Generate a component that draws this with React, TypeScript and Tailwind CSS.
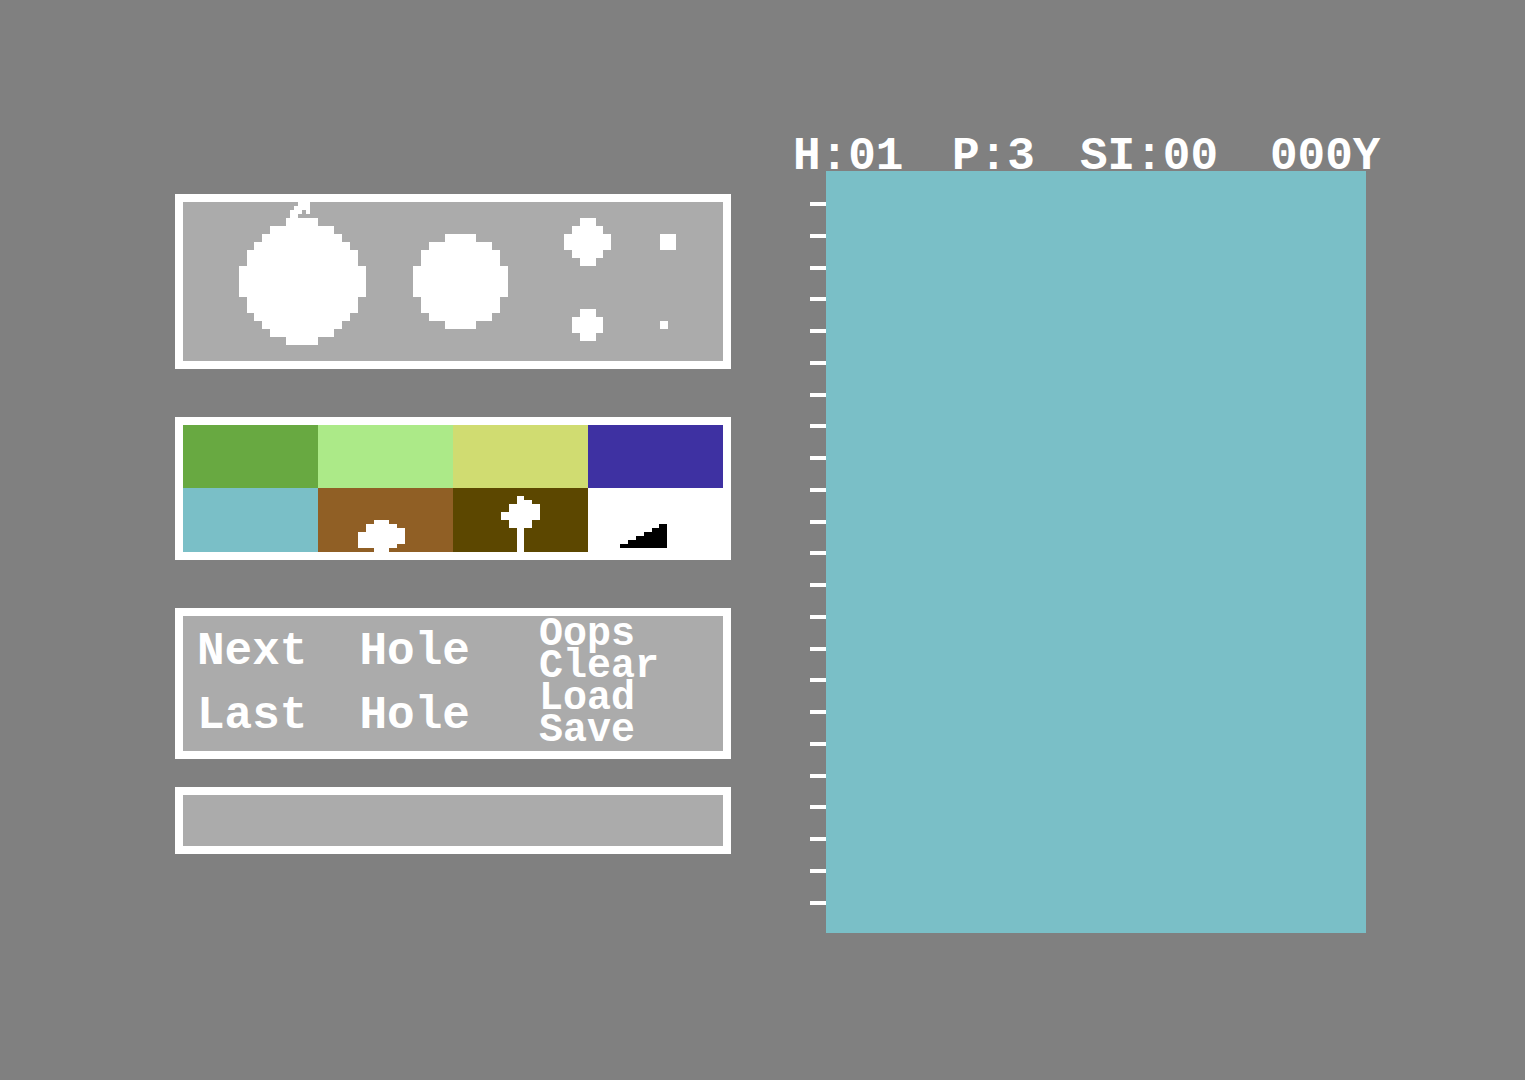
import { useState } from "react";

/* x, y, width, height on the pixel grid */
type Rect = [number, number, number, number];

interface Sprite {
  name: string;
  cols: number;
  rows: number;
  tall?: boolean;
  rects: Rect[];
}

/* ================= BRUSHES ================= */
const brushes: Sprite[] = [
  {
    name: "Huge brush",
    cols: 26,
    rows: 20,
    tall: true,
    rects: [
      [14.5, 0, 1.5, 0.5],
      [14, 0.5, 2, 0.5],
      [13.5, 1, 1.5, 0.5],
      [15.5, 1, 0.5, 0.5],
      [13.5, 1.5, 1, 0.5],
      [13, 2, 4, 16],
      [11, 3, 8, 14],
      [10, 4, 10, 12],
      [9, 5, 12, 10],
      [8, 6, 14, 8],
      [7, 8, 16, 4],
    ],
  },
  {
    name: "Large brush",
    cols: 18,
    rows: 20,
    tall: true,
    rects: [
      [7, 4, 4, 12],
      [5, 5, 8, 10],
      [4, 6, 10, 8],
      [3, 8, 12, 4],
    ],
  },
  {
    name: "Medium brush",
    cols: 13,
    rows: 10,
    rects: [
      [6, 2, 2, 6],
      [5, 3, 4, 4],
      [4, 4, 6, 2],
    ],
  },
  {
    name: "Small brush",
    cols: 13,
    rows: 10,
    rects: [
      [6, 3.5, 2, 4],
      [5, 4.5, 4, 2],
    ],
  },
  { name: "Square brush", cols: 11, rows: 10, rects: [[3, 4, 2, 2]] },
  { name: "Dot brush", cols: 11, rows: 10, rects: [[3, 5, 1, 1]] },
];

/* ================= PALETTE ================= */
const bush: Rect[] = [
  [7, 4, 2, 0.5],
  [6, 4.5, 4, 0.5],
  [6, 5, 5, 0.5],
  [5, 5.5, 6, 1.5],
  [5, 7, 5, 0.5],
  [7, 7.5, 2, 0.5],
];

const tree: Rect[] = [
  [8, 1, 1, 7],
  [8, 1.5, 2, 0.5],
  [7, 2, 4, 1],
  [6, 3, 5, 1],
  [7, 4, 3, 1],
];

const slope: Rect[] = [
  [9, 4.5, 1, 0.5],
  [8, 5, 2, 0.5],
  [7, 5.5, 3, 0.5],
  [6, 6, 4, 0.5],
  [5, 6.5, 5, 0.5],
  [4, 7, 6, 0.5],
];

const swatches = [
  { name: "Fairway", bg: "bg-[#68a941]", ink: "text-white", rects: [] as Rect[] },
  { name: "Green", bg: "bg-[#acea88]", ink: "text-white", rects: [] as Rect[] },
  { name: "Sand", bg: "bg-[#d0dc71]", ink: "text-white", rects: [] as Rect[] },
  { name: "Water", bg: "bg-[#3e31a2]", ink: "text-white", rects: [] as Rect[] },
  { name: "Rough", bg: "bg-[#7abfc7]", ink: "text-white", rects: [] as Rect[] },
  { name: "Bush", bg: "bg-[#905f25]", ink: "text-white", rects: bush },
  { name: "Tree", bg: "bg-[#5c4700]", ink: "text-white", rects: tree },
  { name: "Slope", bg: "bg-white", ink: "text-black", rects: slope },
];

const fileActions = ["Oops", "Clear", "Load", "Save"];
const holeActions = ["Next", "Last"];

/* ruler marks beside the hole view */
const ticks: Rect[] = Array.from({ length: 23 }, (_, i) => [0, 31 + Math.round(i * 31.75), 16, 4]);

const PixelArt = ({ cols, rows, rects }: { cols: number; rows: number; rects: Rect[] }) => (
  <svg
    viewBox={`0 0 ${cols} ${rows}`}
    className="block w-full"
    fill="currentColor"
    shapeRendering="crispEdges"
    aria-hidden="true"
  >
    {rects.map(([x, y, w, h], i) => (
      <rect key={i} x={x} y={y} width={w} height={h} />
    ))}
  </svg>
);

const App = () => {
  const [brush, setBrush] = useState("Huge brush");
  const [colour, setColour] = useState("Rough");

  return (
    <main className="grid min-h-screen grid-cols-[556fr_607fr] items-start gap-[62px] bg-[#808080] pt-[141px] pr-[125px] pb-12 pl-[175px] font-['Liberation_Mono',monospace] text-[46px] leading-8 font-bold text-white">
      {/* ================= TOOL PANELS ================= */}
      <div className="flex flex-col gap-12 pt-[53px]">
        <section className="grid grid-flow-col grid-cols-[26fr_18fr_13fr_11fr] grid-rows-2 border-8 border-white bg-[#ababab]">
          {brushes.map((b) => (
            <button
              key={b.name}
              aria-label={b.name}
              aria-pressed={brush === b.name}
              onClick={() => setBrush(b.name)}
              className={b.tall ? "row-span-2" : ""}
            >
              <PixelArt cols={b.cols} rows={b.rows} rects={b.rects} />
            </button>
          ))}
        </section>

        <section className="grid grid-cols-4 border-8 border-white bg-white">
          {swatches.map((s) => (
            <button
              key={s.name}
              aria-label={s.name}
              aria-pressed={colour === s.name}
              onClick={() => setColour(s.name)}
              className={`${s.bg} ${s.ink}`}
            >
              <PixelArt cols={17} rows={8} rects={s.rects} />
            </button>
          ))}
        </section>

        <div className="flex flex-col gap-7">
          <section className="flex border-8 border-white bg-[#ababab] pb-1 pl-3.5">
            <div className="flex grow flex-col items-start gap-8 pt-5">
              {holeActions.map((label) => (
                <button key={label} className="flex gap-[52px]">
                  <span>{label}</span>
                  <span>Hole</span>
                </button>
              ))}
            </div>
            <div className="flex w-[184px] flex-col items-start pt-[3px] text-[40px] leading-8">
              {fileActions.map((label) => (
                <button key={label}>{label}</button>
              ))}
            </div>
          </section>

          {/* Message line */}
          <output className="block h-[67px] border-8 border-white bg-[#ababab]" />
        </div>
      </div>

      {/* ================= HOLE VIEW ================= */}
      <div>
        <h1 className="grid h-[30px] grid-cols-[159fr_128fr_190fr_130fr] whitespace-nowrap">
          <span>H:01</span>
          <span>P:3</span>
          <span>SI:00</span>
          <span>000Y</span>
        </h1>
        <div className="flex items-start pr-[34px] pl-[17px]">
          <div className="w-4 shrink-0">
            <PixelArt cols={16} rows={762} rects={ticks} />
          </div>
          <div role="img" aria-label="Hole map" className="aspect-[540/762] grow bg-[#7abfc7]" />
        </div>
      </div>
    </main>
  );
};

export default App;
